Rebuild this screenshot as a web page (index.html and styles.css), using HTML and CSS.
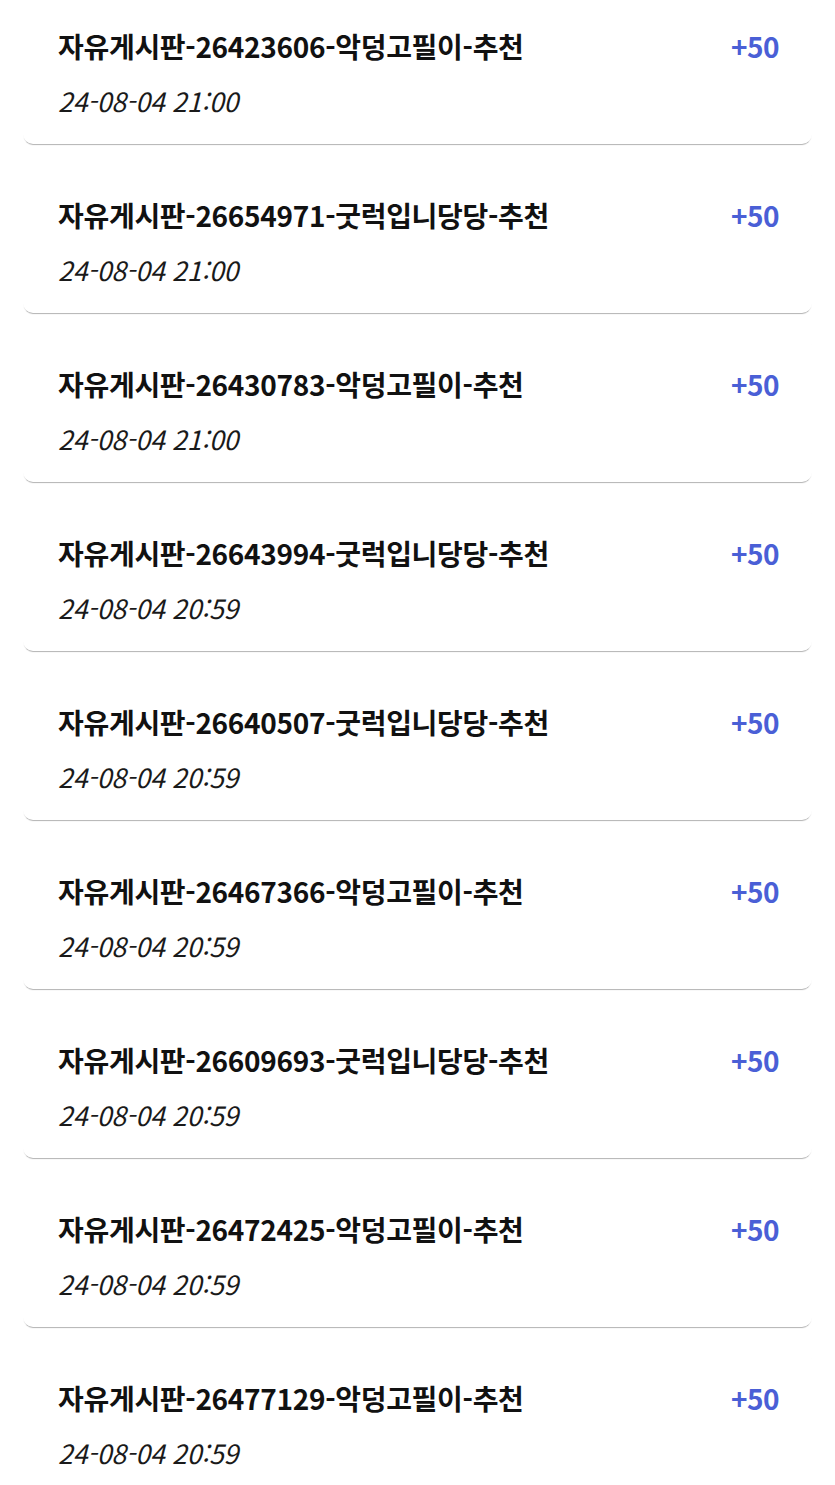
FILE: index.html
```html
<!DOCTYPE html>
<html lang="ko">
<head>
  <meta charset="UTF-8" />
  <meta name="viewport" content="width=device-width, initial-scale=1.0" />
  <title>포인트 내역</title>
  <link rel="stylesheet" href="styles.css">
</head>
<body>
  <ul class="point-list">
    <li class="point-card">
      <div class="point-info">
        <div class="point-title">자유게시판-26423606-악덩고필이-추천</div>
        <div class="point-date">24-08-04 21:00</div>
      </div>
      <div class="point-amount">+50</div>
    </li>
    <li class="point-card">
      <div class="point-info">
        <div class="point-title">자유게시판-26654971-굿럭입니당당-추천</div>
        <div class="point-date">24-08-04 21:00</div>
      </div>
      <div class="point-amount">+50</div>
    </li>
    <li class="point-card">
      <div class="point-info">
        <div class="point-title">자유게시판-26430783-악덩고필이-추천</div>
        <div class="point-date">24-08-04 21:00</div>
      </div>
      <div class="point-amount">+50</div>
    </li>
    <li class="point-card">
      <div class="point-info">
        <div class="point-title">자유게시판-26643994-굿럭입니당당-추천</div>
        <div class="point-date">24-08-04 20:59</div>
      </div>
      <div class="point-amount">+50</div>
    </li>
    <li class="point-card">
      <div class="point-info">
        <div class="point-title">자유게시판-26640507-굿럭입니당당-추천</div>
        <div class="point-date">24-08-04 20:59</div>
      </div>
      <div class="point-amount">+50</div>
    </li>
    <li class="point-card">
      <div class="point-info">
        <div class="point-title">자유게시판-26467366-악덩고필이-추천</div>
        <div class="point-date">24-08-04 20:59</div>
      </div>
      <div class="point-amount">+50</div>
    </li>
    <li class="point-card">
      <div class="point-info">
        <div class="point-title">자유게시판-26609693-굿럭입니당당-추천</div>
        <div class="point-date">24-08-04 20:59</div>
      </div>
      <div class="point-amount">+50</div>
    </li>
    <li class="point-card">
      <div class="point-info">
        <div class="point-title">자유게시판-26472425-악덩고필이-추천</div>
        <div class="point-date">24-08-04 20:59</div>
      </div>
      <div class="point-amount">+50</div>
    </li>
    <li class="point-card">
      <div class="point-info">
        <div class="point-title">자유게시판-26477129-악덩고필이-추천</div>
        <div class="point-date">24-08-04 20:59</div>
      </div>
      <div class="point-amount">+50</div>
    </li>
  </ul>
</body>
</html>
```

FILE: styles.css
```css
body {
  font-family: "Noto Sans CJK KR", "Noto Sans", sans-serif;
  background-color: #fff;
  color: #111;
  margin: 0;
  padding: 0 23px;
  overflow: hidden;
}

.point-list {
  list-style: none;
  margin: -2px 0 0;
  padding: 0;
  display: flex;
  flex-direction: column;
  gap: 23px;
}

.point-card {
  display: flex;
  justify-content: space-between;
  align-items: flex-start;
  height: 146px;
  box-sizing: border-box;
  padding: 24px 33px 0 35px;
  background: #fff;
  border-radius: 10px;
  box-shadow: 0 2px 1px -1px rgba(0, 0, 0, 0.3);
}

.point-title {
  font-size: 28px;
  font-weight: 700;
  line-height: 48px;
  letter-spacing: -0.3px;
}

.point-date {
  font-size: 26.5px;
  font-weight: 400;
  font-style: italic;
  line-height: 62px;
  color: #1a1a1a;
}

.point-amount {
  font-size: 28px;
  font-weight: 700;
  line-height: 48px;
  color: #4a5fd6;
  letter-spacing: -0.5px;
}
```
